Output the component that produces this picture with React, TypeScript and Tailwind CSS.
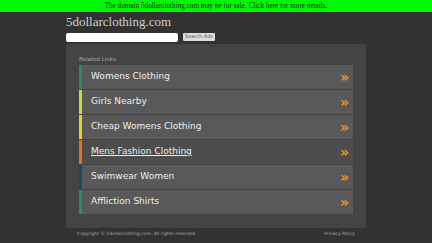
import React from "react";

const rows = [
  { t: "Womens Clothing", c: "bg-[#2a8a6e]" },
  { t: "Girls Nearby", c: "bg-[#c8d83a]" },
  { t: "Cheap Womens Clothing", c: "bg-[#e8d230]" },
  { t: "Mens Fashion Clothing", c: "bg-[#e07420]", hover: true },
  { t: "Swimwear Women", c: "bg-[#1c4a5c]" },
  { t: "Affliction Shirts", c: "bg-[#2a8a70]" },
];

export default function App() {
  return (
    <div className="w-[432px] h-[243px] bg-[#323232] overflow-hidden">
      <div className="h-[12px] bg-[#00f800] flex items-center justify-center text-[7.2px] text-[#2a2a2a] [font-family:'Liberation_Serif',serif]">
        The domain 5dollarclothing.com may be for sale. Click here for more details.
      </div>
      <div className="w-[300px] mx-auto">
        <div className="h-[18px] pt-[1px] text-[13px] leading-[18px] text-[#d0d0d0] [font-family:'Liberation_Serif',serif]">
          5dollarclothing.com
        </div>
        <div className="flex items-center h-[12px] mt-[1px]">
          <div className="w-[112px] h-[9px] bg-white rounded-[2px]"></div>
          <div className="ml-[5px] w-[32px] h-[8px] bg-[#dcdcdc] rounded-[1px] flex items-center justify-center text-[5px] text-[#555] [font-family:'DejaVu_Sans',sans-serif]">
            Search Ads
          </div>
        </div>
        <div className="mt-[1px] h-[184px] bg-[#444444] rounded-[2px] px-[13px] pt-[12px]">
          <div className="h-[9px] text-[5.5px] leading-[6px] text-[#a8a8a8] [font-family:'DejaVu_Sans',sans-serif]">
            Related Links
          </div>
          <div className="flex flex-col gap-[1px]">
            {rows.map((r) => (
              <div
                key={r.t}
                className={`h-[24px] flex items-center ${r.hover ? "bg-[#4d4d4d]" : "bg-[#595959]"}`}
              >
                <div className={`w-[3px] h-full ${r.c}`}></div>
                <div
                  className={`flex-1 pl-[9px] text-[9px] text-[#eeeeee] [font-family:'DejaVu_Sans',sans-serif] ${r.hover ? "underline" : ""}`}
                >
                  {r.t}
                </div>
                <div className="pr-[4px] text-[14px] font-bold text-[#e8962a] [font-family:'DejaVu_Sans',sans-serif] leading-none">
                  »
                </div>
              </div>
            ))}
          </div>
        </div>
        <div className="flex justify-between px-[11px] pt-[3px] text-[4.5px] text-[#aaaaaa] [font-family:'DejaVu_Sans',sans-serif]">
          <span>Copyright © 5dollarclothing.com. All rights reserved.</span>
          <span>Privacy Policy</span>
        </div>
      </div>
    </div>
  );
}
